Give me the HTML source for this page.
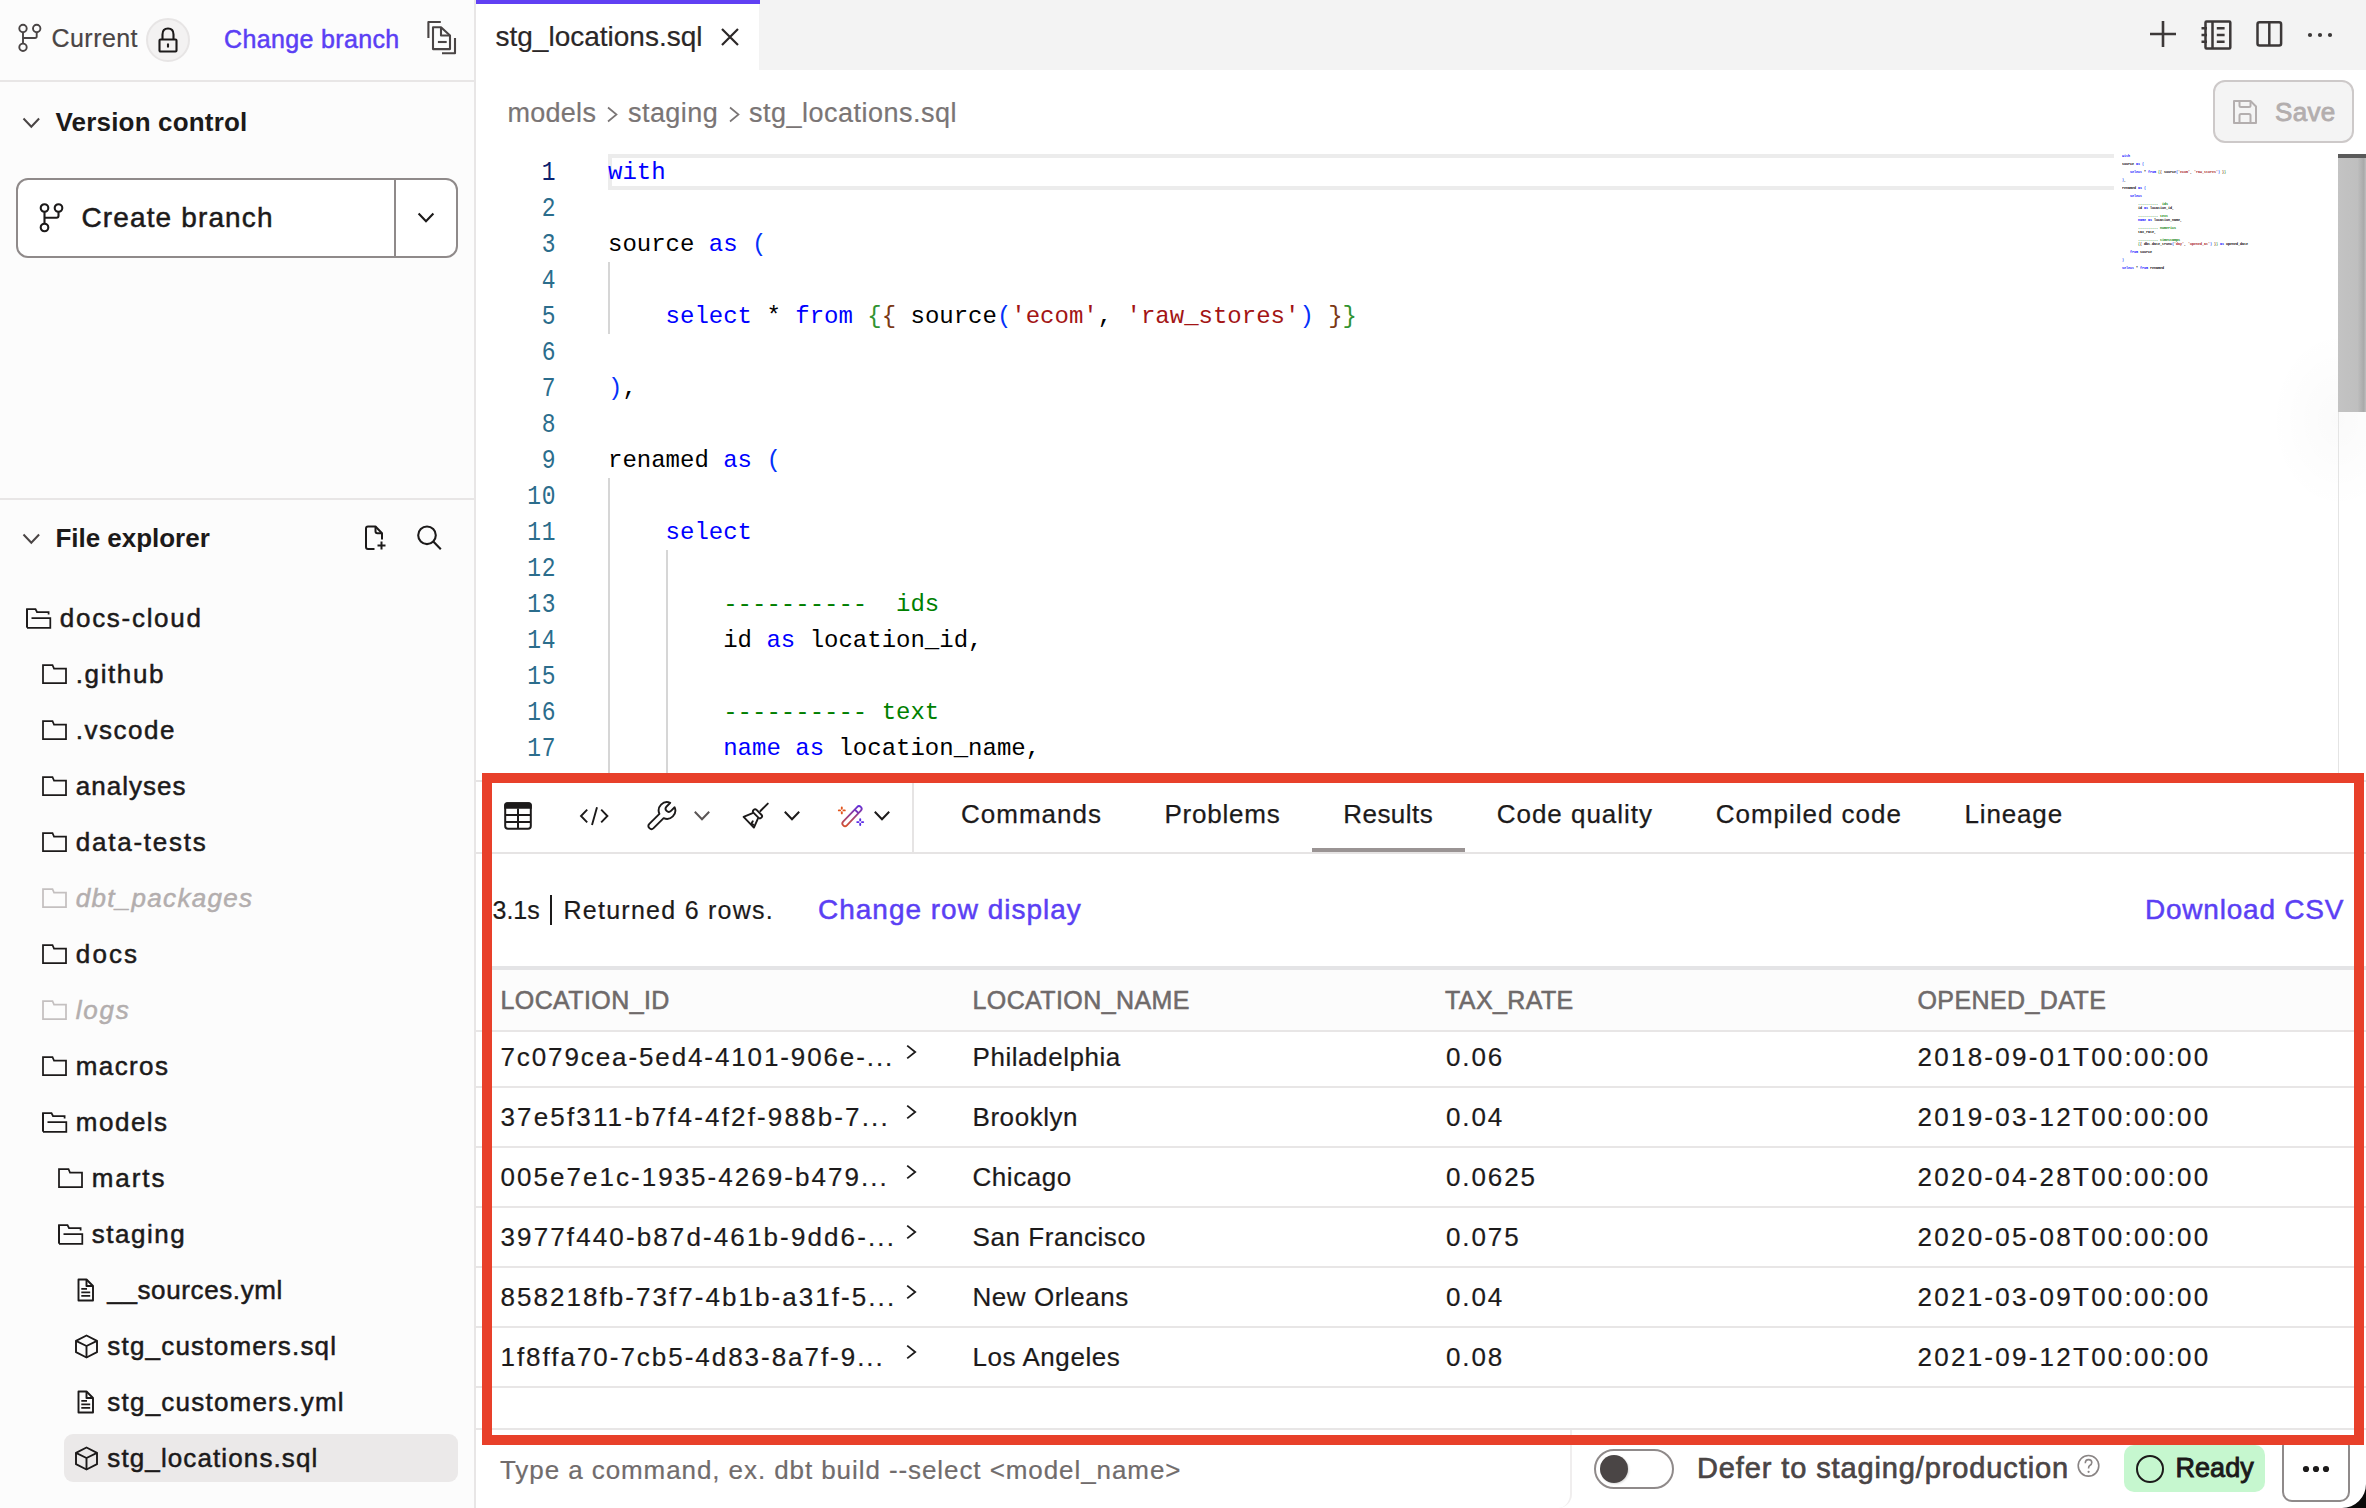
<!DOCTYPE html>
<html><head><meta charset='utf-8'><style>
html,body{margin:0;padding:0;}
body{width:2366px;height:1508px;overflow:hidden;position:relative;background:#fff;font-family:"Liberation Sans", sans-serif;}
.a{position:absolute;}
.t{position:absolute;white-space:pre;}
.ln{position:absolute;left:500px;width:56px;text-align:right;font-family:"Liberation Mono", monospace;font-size:27px;letter-spacing:0.7px;line-height:36px;height:36px;padding-top:1px;transform:scaleX(0.85);transform-origin:right center;}
.cl{position:absolute;left:608px;font-family:"Liberation Mono", monospace;font-size:24px;line-height:36px;height:36px;white-space:pre;padding-top:1px;}

</style></head><body>
<!-- sidebar -->
<div class='a' style='left:0;top:0;width:474px;height:1508px;background:#fcfcfc'></div>
<div class='a' style='left:474px;top:0;width:2px;height:1508px;background:#e8e6e6'></div>
<div class='a' style='left:0;top:80px;width:474px;height:2px;background:#e8e6e6'></div>
<div class='a' style='left:0;top:498px;width:474px;height:2px;background:#e8e6e6'></div>
<!-- tab bar -->
<div class='a' style='left:476px;top:0;width:1890px;height:70px;background:#f3f3f3'></div>
<div class='a' style='left:476px;top:0;width:283px;height:70px;background:#fff'></div>
<div class='a' style='left:476px;top:0;width:283.5px;height:4px;background:#6040f3'></div>
<!-- current line -->
<div class='a' style='left:608px;top:154px;width:1502px;height:28px;border:4px solid #ececec;border-right:none'></div>
<!-- indent guides -->
<div class='a' style='left:608px;top:262px;width:2px;height:72px;background:#d6d6d6'></div>
<div class='a' style='left:608px;top:478px;width:2px;height:302px;background:#d6d6d6'></div>
<div class='a' style='left:666px;top:550px;width:2px;height:230px;background:#d6d6d6'></div>
<div class='ln' style='top:154px;color:#0b216f'>1</div><div class='cl' style='top:154px'><span style='color:#0000ff'>with</span></div><div class='ln' style='top:190px;color:#2b6d8c'>2</div><div class='ln' style='top:226px;color:#2b6d8c'>3</div><div class='cl' style='top:226px'><span style='color:#000000'>source </span><span style='color:#0000ff'>as</span><span style='color:#000000'> </span><span style='color:#0431fa'>(</span></div><div class='ln' style='top:262px;color:#2b6d8c'>4</div><div class='ln' style='top:298px;color:#2b6d8c'>5</div><div class='cl' style='top:298px'><span style='color:#0000ff'>    select</span><span style='color:#000000'> * </span><span style='color:#0000ff'>from</span><span style='color:#000000'> </span><span style='color:#319331'>{</span><span style='color:#7b3814'>{</span><span style='color:#000000'> source</span><span style='color:#0431fa'>(</span><span style='color:#a31515'>&#x27;ecom&#x27;</span><span style='color:#000000'>, </span><span style='color:#a31515'>&#x27;raw_stores&#x27;</span><span style='color:#0431fa'>)</span><span style='color:#000000'> </span><span style='color:#7b3814'>}</span><span style='color:#319331'>}</span></div><div class='ln' style='top:334px;color:#2b6d8c'>6</div><div class='ln' style='top:370px;color:#2b6d8c'>7</div><div class='cl' style='top:370px'><span style='color:#0431fa'>)</span><span style='color:#000000'>,</span></div><div class='ln' style='top:406px;color:#2b6d8c'>8</div><div class='ln' style='top:442px;color:#2b6d8c'>9</div><div class='cl' style='top:442px'><span style='color:#000000'>renamed </span><span style='color:#0000ff'>as</span><span style='color:#000000'> </span><span style='color:#0431fa'>(</span></div><div class='ln' style='top:478px;color:#2b6d8c'>10</div><div class='ln' style='top:514px;color:#2b6d8c'>11</div><div class='cl' style='top:514px'><span style='color:#0000ff'>    select</span></div><div class='ln' style='top:550px;color:#2b6d8c'>12</div><div class='ln' style='top:586px;color:#2b6d8c'>13</div><div class='cl' style='top:586px'><span style='color:#008000'>        ----------  ids</span></div><div class='ln' style='top:622px;color:#2b6d8c'>14</div><div class='cl' style='top:622px'><span style='color:#000000'>        id </span><span style='color:#0000ff'>as</span><span style='color:#000000'> location_id,</span></div><div class='ln' style='top:658px;color:#2b6d8c'>15</div><div class='ln' style='top:694px;color:#2b6d8c'>16</div><div class='cl' style='top:694px'><span style='color:#008000'>        ---------- text</span></div><div class='ln' style='top:730px;color:#2b6d8c'>17</div><div class='cl' style='top:730px'><span style='color:#000000'>        </span><span style='color:#0000ff'>name</span><span style='color:#000000'> </span><span style='color:#0000ff'>as</span><span style='color:#000000'> location_name,</span></div>
<!-- minimap -->
<div class='a' style='left:2122px;top:154px;width:2000px;font-family:"Liberation Mono", monospace;font-size:24px;line-height:36px;transform:scale(0.13889,0.11111);transform-origin:0 0;font-weight:700'><div style='height:36px;white-space:pre'><span style='color:#0000ff'>with</span></div><div style='height:36px;white-space:pre'></div><div style='height:36px;white-space:pre'><span style='color:#000000'>source </span><span style='color:#0000ff'>as</span><span style='color:#000000'> </span><span style='color:#0431fa'>(</span></div><div style='height:36px;white-space:pre'></div><div style='height:36px;white-space:pre'><span style='color:#0000ff'>    select</span><span style='color:#000000'> * </span><span style='color:#0000ff'>from</span><span style='color:#000000'> </span><span style='color:#319331'>{</span><span style='color:#7b3814'>{</span><span style='color:#000000'> source</span><span style='color:#0431fa'>(</span><span style='color:#a31515'>&#x27;ecom&#x27;</span><span style='color:#000000'>, </span><span style='color:#a31515'>&#x27;raw_stores&#x27;</span><span style='color:#0431fa'>)</span><span style='color:#000000'> </span><span style='color:#7b3814'>}</span><span style='color:#319331'>}</span></div><div style='height:36px;white-space:pre'></div><div style='height:36px;white-space:pre'><span style='color:#0431fa'>)</span><span style='color:#000000'>,</span></div><div style='height:36px;white-space:pre'></div><div style='height:36px;white-space:pre'><span style='color:#000000'>renamed </span><span style='color:#0000ff'>as</span><span style='color:#000000'> </span><span style='color:#0431fa'>(</span></div><div style='height:36px;white-space:pre'></div><div style='height:36px;white-space:pre'><span style='color:#0000ff'>    select</span></div><div style='height:36px;white-space:pre'></div><div style='height:36px;white-space:pre'><span style='color:#008000'>        ----------  ids</span></div><div style='height:36px;white-space:pre'><span style='color:#000000'>        id </span><span style='color:#0000ff'>as</span><span style='color:#000000'> location_id,</span></div><div style='height:36px;white-space:pre'></div><div style='height:36px;white-space:pre'><span style='color:#008000'>        ---------- text</span></div><div style='height:36px;white-space:pre'><span style='color:#000000'>        </span><span style='color:#0000ff'>name</span><span style='color:#000000'> </span><span style='color:#0000ff'>as</span><span style='color:#000000'> location_name,</span></div><div style='height:36px;white-space:pre'></div><div style='height:36px;white-space:pre'><span style='color:#008000'>        ---------- numerics</span></div><div style='height:36px;white-space:pre'><span style='color:#000000'>        tax_rate,</span></div><div style='height:36px;white-space:pre'></div><div style='height:36px;white-space:pre'><span style='color:#008000'>        ---------- timestamps</span></div><div style='height:36px;white-space:pre'><span style='color:#000000'>        </span><span style='color:#319331'>{</span><span style='color:#7b3814'>{</span><span style='color:#000000'> dbt.date_trunc</span><span style='color:#0431fa'>(</span><span style='color:#a31515'>&#x27;day&#x27;</span><span style='color:#000000'>, </span><span style='color:#a31515'>&#x27;opened_at&#x27;</span><span style='color:#0431fa'>)</span><span style='color:#000000'> </span><span style='color:#7b3814'>}</span><span style='color:#319331'>}</span><span style='color:#000000'> </span><span style='color:#0000ff'>as</span><span style='color:#000000'> opened_date</span></div><div style='height:36px;white-space:pre'></div><div style='height:36px;white-space:pre'><span style='color:#0000ff'>    from</span><span style='color:#000000'> source</span></div><div style='height:36px;white-space:pre'></div><div style='height:36px;white-space:pre'><span style='color:#0431fa'>)</span></div><div style='height:36px;white-space:pre'></div><div style='height:36px;white-space:pre'><span style='color:#0000ff'>select</span><span style='color:#000000'> * </span><span style='color:#0000ff'>from</span><span style='color:#000000'> renamed</span></div></div>
<div class='a' style='left:2270px;top:330px;width:136px;height:180px;background:radial-gradient(ellipse 68px 90px at 68px 90px, rgba(0,0,0,0.02), rgba(0,0,0,0))'></div>
<div class='a' style='left:2338px;top:412px;width:1px;height:361px;background:#e4e4e4'></div>
<div class='a' style='left:2338px;top:154px;width:28px;height:258px;background:linear-gradient(to right,#c3c3c3 0%,#bfbfbf 70%,#a9a9a9 92%,#c0c0c0 100%)'></div>
<div class='a' style='left:2338px;top:154px;width:28px;height:4px;background:#5a5a5a'></div>
<!-- panel -->
<div class='a' style='left:476px;top:780px;width:1890px;height:2px;background:#e6e4e4'></div>
<div class='a' style='left:476px;top:852px;width:1890px;height:2px;background:#e6e4e4'></div>
<div class='a' style='left:912px;top:782px;width:2px;height:70px;background:#e6e4e4'></div>
<div class='a' style='left:1312px;top:848px;width:153px;height:4px;background:#9a9494'></div>
<div class='a' style='left:549.5px;top:895px;width:2.5px;height:30px;background:#1c1a1a'></div>
<div class='a' style='left:492px;top:966px;width:1874px;height:4px;background:#e4e4e6'></div>
<div class='a' style='left:492px;top:970px;width:1874px;height:60px;background:#fcfcfc'></div>
<div class='a' style='left:476px;top:1030px;width:1890px;height:2px;background:#e8e6e6'></div><div class='a' style='left:476px;top:1086px;width:1890px;height:2px;background:#e8e6e6'></div><div class='a' style='left:476px;top:1146px;width:1890px;height:2px;background:#e8e6e6'></div><div class='a' style='left:476px;top:1206px;width:1890px;height:2px;background:#e8e6e6'></div><div class='a' style='left:476px;top:1266px;width:1890px;height:2px;background:#e8e6e6'></div><div class='a' style='left:476px;top:1326px;width:1890px;height:2px;background:#e8e6e6'></div><div class='a' style='left:476px;top:1386px;width:1890px;height:2px;background:#e8e6e6'></div><div class='a' style='left:476px;top:1428px;width:1890px;height:2px;background:#e8e6e6'></div>
<!-- command bar -->
<div class='a' style='left:476px;top:1430px;width:1094px;height:78px;border-right:2px solid #f0eeee;border-bottom-right-radius:14px'></div>
<svg class='a' style='left:16px;top:22px;' width='28' height='32' viewBox='0 0 28 32' fill='none'><g stroke='#4a4545' stroke-width='1.9'><circle cx='7' cy='6.5' r='3.7'/><circle cx='20.7' cy='6.5' r='3.7'/><circle cx='7' cy='25.3' r='3.7'/><path d='M7 10.2V21.6M20.7 10.2V14.2Q20.7 16 18.9 16H7'/></g></svg><div class='a' style='left:146px;top:18px;width:40px;height:40px;border-radius:50%;background:#f3f2f2;border:2px solid #e7e5e5'></div><svg class='a' style='left:156px;top:26px;' width='24' height='28' viewBox='0 0 24 28' fill='none'><g stroke='#1c1a1a' stroke-width='2.1'><path d='M6.5 13.5V8.5Q6.5 2.5 12 2.5Q17.5 2.5 17.5 8.5V13.5'/><rect x='3.5' y='13.5' width='17' height='12' rx='1'/><path d='M12 17.5V21.5'/></g></svg><svg class='a' style='left:426px;top:20px;' width='32' height='36' viewBox='0 0 32 36' fill='none'><g stroke='#4a4545' stroke-width='2.1' stroke-linejoin='round'><path d='M2.4 17.9V2H14.8'/><path d='M7 7.2H15L24 15.5V29.1H7Z'/><path d='M15 7.2V15.5H24' /><path d='M11.9 22H20.7'/><path d='M29 17.9V33.3H16'/></g></svg><svg class='a' style='left:22px;top:115.5px;' width='20' height='14' viewBox='0 0 20 14' fill='none'><path d='M1.5 2.5L9.3 10.8L17.1 2.5' stroke='#4a4545' stroke-width='2'/></svg><svg class='a' style='left:22px;top:531.5px;' width='20' height='14' viewBox='0 0 20 14' fill='none'><path d='M1.5 2.5L9.3 10.8L17.1 2.5' stroke='#4a4545' stroke-width='2'/></svg><div class='a' style='left:16px;top:178px;width:438px;height:76px;border:2px solid #8f8a8a;border-radius:12px;background:#fff'></div><div class='a' style='left:394px;top:180px;width:2px;height:76px;background:#8f8a8a'></div><svg class='a' style='left:38px;top:202px;' width='28' height='32' viewBox='0 0 28 32' fill='none'><g stroke='#1c1a1a' stroke-width='2.1'><circle cx='6.5' cy='6' r='3.8'/><circle cx='20.5' cy='6' r='3.8'/><circle cx='6.5' cy='25.5' r='3.8'/><path d='M6.5 9.8V21.7M20.5 9.8V13.8Q20.5 15.8 18.5 15.8H6.5'/></g></svg><svg class='a' style='left:416px;top:211px;' width='20' height='14' viewBox='0 0 20 14' fill='none'><path d='M2.6 2.5L10 10.3L17.4 2.5' stroke='#1c1a1a' stroke-width='2.1'/></svg><svg class='a' style='left:362px;top:523px;' width='28' height='30' viewBox='0 0 28 30' fill='none'><g stroke='#1c1a1a' stroke-width='2' stroke-linejoin='round'><path d='M12.5 26H6Q4 26 4 24V5.5Q4 3.5 6 3.5H13.5L20 10.2V16.5'/><path d='M13.5 3.5V8.2Q13.5 10.2 15.5 10.2H20'/><path d='M19.5 18.5V26.5M15.5 22.5H23.5'/></g></svg><svg class='a' style='left:415px;top:523px;' width='30' height='30' viewBox='0 0 30 30' fill='none'><g stroke='#1c1a1a' stroke-width='2.1'><circle cx='12' cy='12.3' r='8.8'/><path d='M18.3 18.6L25.8 26.2'/></g></svg><div class='a' style='left:64px;top:1434px;width:394px;height:48px;border-radius:9px;background:#ebe9e9'></div><svg class='a' style='left:26px;top:608px;' width='28' height='24' viewBox='0 0 28 24' fill='none'><path d='M1 19V1H9.5L11 4H22.6V6.5' stroke='#1c1a1a' stroke-width='1.75'/><path d='M5.5 10.2H24.3V19.8H1' stroke='#1c1a1a' stroke-width='1.75'/><path d='M1 1V19.8' stroke='#1c1a1a' stroke-width='1.75'/></svg><svg class='a' style='left:42px;top:664px;' width='28' height='24' viewBox='0 0 28 24' fill='none'><path d='M1 19V1H10.5L12 4.5H24V19Z' stroke='#1c1a1a' stroke-width='1.75' stroke-linejoin='miter'/></svg><svg class='a' style='left:42px;top:720px;' width='28' height='24' viewBox='0 0 28 24' fill='none'><path d='M1 19V1H10.5L12 4.5H24V19Z' stroke='#1c1a1a' stroke-width='1.75' stroke-linejoin='miter'/></svg><svg class='a' style='left:42px;top:776px;' width='28' height='24' viewBox='0 0 28 24' fill='none'><path d='M1 19V1H10.5L12 4.5H24V19Z' stroke='#1c1a1a' stroke-width='1.75' stroke-linejoin='miter'/></svg><svg class='a' style='left:42px;top:832px;' width='28' height='24' viewBox='0 0 28 24' fill='none'><path d='M1 19V1H10.5L12 4.5H24V19Z' stroke='#1c1a1a' stroke-width='1.75' stroke-linejoin='miter'/></svg><svg class='a' style='left:42px;top:888px;' width='28' height='24' viewBox='0 0 28 24' fill='none'><path d='M1 19V1H10.5L12 4.5H24V19Z' stroke='#c4c0c0' stroke-width='1.75' stroke-linejoin='miter'/></svg><svg class='a' style='left:42px;top:944px;' width='28' height='24' viewBox='0 0 28 24' fill='none'><path d='M1 19V1H10.5L12 4.5H24V19Z' stroke='#1c1a1a' stroke-width='1.75' stroke-linejoin='miter'/></svg><svg class='a' style='left:42px;top:1000px;' width='28' height='24' viewBox='0 0 28 24' fill='none'><path d='M1 19V1H10.5L12 4.5H24V19Z' stroke='#c4c0c0' stroke-width='1.75' stroke-linejoin='miter'/></svg><svg class='a' style='left:42px;top:1056px;' width='28' height='24' viewBox='0 0 28 24' fill='none'><path d='M1 19V1H10.5L12 4.5H24V19Z' stroke='#1c1a1a' stroke-width='1.75' stroke-linejoin='miter'/></svg><svg class='a' style='left:42px;top:1112px;' width='28' height='24' viewBox='0 0 28 24' fill='none'><path d='M1 19V1H9.5L11 4H22.6V6.5' stroke='#1c1a1a' stroke-width='1.75'/><path d='M5.5 10.2H24.3V19.8H1' stroke='#1c1a1a' stroke-width='1.75'/><path d='M1 1V19.8' stroke='#1c1a1a' stroke-width='1.75'/></svg><svg class='a' style='left:58px;top:1168px;' width='28' height='24' viewBox='0 0 28 24' fill='none'><path d='M1 19V1H10.5L12 4.5H24V19Z' stroke='#1c1a1a' stroke-width='1.75' stroke-linejoin='miter'/></svg><svg class='a' style='left:58px;top:1224px;' width='28' height='24' viewBox='0 0 28 24' fill='none'><path d='M1 19V1H9.5L11 4H22.6V6.5' stroke='#1c1a1a' stroke-width='1.75'/><path d='M5.5 10.2H24.3V19.8H1' stroke='#1c1a1a' stroke-width='1.75'/><path d='M1 1V19.8' stroke='#1c1a1a' stroke-width='1.75'/></svg><svg class='a' style='left:77px;top:1277.5px;' width='18' height='24' viewBox='0 0 18 24' fill='none'><g stroke='#1c1a1a' stroke-width='1.9' stroke-linejoin='round'><path d='M1.5 1.5H9.5L16 8V22.5H1.5Z'/><path d='M9.5 1.5V8H16'/></g><g stroke='#1c1a1a' stroke-width='1.8'><path d='M4.3 10.8H10M4.3 14.3H13.2M4.3 17.8H13.2'/></g></svg><svg class='a' style='left:74.5px;top:1333.5px;' width='23' height='25' viewBox='0 0 23 25' fill='none'><g stroke='#1c1a1a' stroke-width='1.9' stroke-linejoin='round'><path d='M11.5 1.5L22 6.8V18.2L11.5 23.5L1 18.2V6.8Z'/><path d='M1 6.8L11.5 12L22 6.8M11.5 12V23.5'/></g></svg><svg class='a' style='left:77px;top:1389.5px;' width='18' height='24' viewBox='0 0 18 24' fill='none'><g stroke='#1c1a1a' stroke-width='1.9' stroke-linejoin='round'><path d='M1.5 1.5H9.5L16 8V22.5H1.5Z'/><path d='M9.5 1.5V8H16'/></g><g stroke='#1c1a1a' stroke-width='1.8'><path d='M4.3 10.8H10M4.3 14.3H13.2M4.3 17.8H13.2'/></g></svg><svg class='a' style='left:74.5px;top:1445.5px;' width='23' height='25' viewBox='0 0 23 25' fill='none'><g stroke='#1c1a1a' stroke-width='1.9' stroke-linejoin='round'><path d='M11.5 1.5L22 6.8V18.2L11.5 23.5L1 18.2V6.8Z'/><path d='M1 6.8L11.5 12L22 6.8M11.5 12V23.5'/></g></svg><svg class='a' style='left:605px;top:105px;' width='16' height='20' viewBox='0 0 16 20' fill='none'><path d='M3 2.5L11.5 9.5L3 16.5' stroke='#7a7575' stroke-width='1.7'/></svg><svg class='a' style='left:726.5px;top:105px;' width='16' height='20' viewBox='0 0 16 20' fill='none'><path d='M3 2.5L11.5 9.5L3 16.5' stroke='#7a7575' stroke-width='1.7'/></svg><svg class='a' style='left:719px;top:26px;' width='22' height='22' viewBox='0 0 22 22' fill='none'><path d='M3 3L19 19M19 3L3 19' stroke='#2b2727' stroke-width='2.2'/></svg><svg class='a' style='left:2148px;top:19px;' width='30' height='30' viewBox='0 0 30 30' fill='none'><path d='M15 2V28M2 15H28' stroke='#3c3838' stroke-width='2.6'/></svg><svg class='a' style='left:2199px;top:18px;' width='34' height='34' viewBox='0 0 34 34' fill='none'><g stroke='#3c3838' stroke-width='2.5'><rect x='6.5' y='3.5' width='24.8' height='27' rx='1'/><path d='M13.5 3.7V30.3M17.8 10.2H25.6M17.8 17H25.6M17.8 23.8H25.6M2.5 10.2H8M2.5 17H8M2.5 23.8H8'/></g></svg><svg class='a' style='left:2254px;top:19px;' width='30' height='30' viewBox='0 0 30 30' fill='none'><g stroke='#3c3838' stroke-width='2.5'><rect x='3.5' y='3.2' width='23.6' height='23.4' rx='2'/><path d='M15.3 3V26.6'/></g></svg><svg class='a' style='left:2304px;top:29px;' width='32' height='12' viewBox='0 0 32 12' fill='none'><g fill='#3c3838'><circle cx='6' cy='6' r='2.1'/><circle cx='16' cy='6' r='2.1'/><circle cx='26' cy='6' r='2.1'/></g></svg><div class='a' style='left:2213px;top:80px;width:137px;height:59px;border:2px solid #cdc9c9;border-radius:12px;background:#f4f4f4'></div><svg class='a' style='left:2231px;top:98px;' width='28' height='28' viewBox='0 0 28 28' fill='none'><g stroke='#b3aeae' stroke-width='2' stroke-linejoin='round'><path d='M3 3H19.5L25 8.5V25H3Z'/><path d='M8.5 3V7.5Q8.5 9 10 9H18Q19.5 9 19.5 7.5V3'/><path d='M8.5 25V17.5Q8.5 16 10 16H18Q19.5 16 19.5 17.5V25'/></g></svg><svg class='a' style='left:502px;top:800px;' width='32' height='32' viewBox='0 0 32 32' fill='none'><g stroke='#1c1a1a' stroke-width='2'><rect x='3.2' y='3.2' width='25.6' height='25.6' rx='2.8'/><path d='M3.2 14.9H28.8M3.2 21.9H28.8M16 8.5V28.8'/></g><path d='M2.2 5.2Q2.2 2.2 5.2 2.2H26.8Q29.8 2.2 29.8 5.2V8.8H2.2Z' fill='#1c1a1a'/></svg><svg class='a' style='left:578px;top:804px;' width='32' height='24' viewBox='0 0 32 24' fill='none'><g stroke='#1c1a1a' stroke-width='1.9'><path d='M9.2 5.6L3 12L9.2 18.3M23.2 5.6L29.4 12L23.2 18.3M19 3.3L14 21'/></g></svg><svg class='a' style='left:647px;top:800px;' width='32' height='32' viewBox='0 0 32 32' fill='none'><path d='M23.24 2.86A8.3 8.3 0 0 0 12.41 13.85L2.33 23.93A3 3 0 0 0 6.57 28.17L16.65 18.09A8.3 8.3 0 0 0 27.64 7.26L24 10.9A3.1 3.1 0 0 1 19.6 6.5Z' stroke='#1c1a1a' stroke-width='1.9' stroke-linejoin='round'/></svg><svg class='a' style='left:741px;top:801px;' width='30' height='30' viewBox='0 0 30 30' fill='none'><g stroke='#1c1a1a' stroke-width='1.9' stroke-linejoin='round' stroke-linecap='round'><path d='M26.8 2.6L19.4 10'/><rect x='14.4' y='7.3' width='4.2' height='11' rx='2.1' transform='rotate(-45 16.5 12.8)'/><path d='M11.6 12.2L2.6 15.9L12.9 26.6L16.9 17.6'/><path d='M11.8 20.2L10.4 22.6L12.4 23.8'/></g></svg><svg class='a' style='left:835px;top:801px' width='32' height='30' viewBox='0 0 32 30' fill='none'><defs><linearGradient id='wg' gradientUnits='userSpaceOnUse' x1='9' y1='24' x2='25' y2='7'><stop offset='0' stop-color='#e2541b'/><stop offset='1' stop-color='#5a2be6'/></linearGradient></defs><g stroke='url(#wg)' stroke-width='1.8'><rect x='4.25' y='12.55' width='25.5' height='5.2' rx='2.6' transform='rotate(-46.4 17 15.15)'/><path d='M19.7 8.5L23.5 12.1'/></g><g stroke-width='1.9' stroke-linecap='round'><path d='M6.8 6.4V7.7M6.8 11.1V12.4M3.8 9.4H5.1M8.5 9.4H9.8' stroke='#e2541b'/><path d='M25.2 18.1V19.4M25.2 22.8V24.1M22.2 21.1H23.5M26.9 21.1H28.2' stroke='#5a2be6'/></g></svg><svg class='a' style='left:693px;top:810px;' width='18' height='12' viewBox='0 0 18 12' fill='none'><path d='M1.8 1.8L9 9.2L16.2 1.8' stroke='#5a5555' stroke-width='2'/></svg><svg class='a' style='left:783px;top:810px;' width='18' height='12' viewBox='0 0 18 12' fill='none'><path d='M1.8 1.8L9 9.2L16.2 1.8' stroke='#1c1a1a' stroke-width='2'/></svg><svg class='a' style='left:873px;top:810px;' width='18' height='12' viewBox='0 0 18 12' fill='none'><path d='M1.8 1.8L9 9.2L16.2 1.8' stroke='#1c1a1a' stroke-width='2'/></svg><svg class='a' style='left:903px;top:1043px;' width='16' height='18' viewBox='0 0 16 18' fill='none'><path d='M4.2 2.6L12.2 9L4.2 15.4' stroke='#1c1a1a' stroke-width='1.8'/></svg><svg class='a' style='left:903px;top:1102.6px;' width='16' height='18' viewBox='0 0 16 18' fill='none'><path d='M4.2 2.6L12.2 9L4.2 15.4' stroke='#1c1a1a' stroke-width='1.8'/></svg><svg class='a' style='left:903px;top:1162.6px;' width='16' height='18' viewBox='0 0 16 18' fill='none'><path d='M4.2 2.6L12.2 9L4.2 15.4' stroke='#1c1a1a' stroke-width='1.8'/></svg><svg class='a' style='left:903px;top:1222.6px;' width='16' height='18' viewBox='0 0 16 18' fill='none'><path d='M4.2 2.6L12.2 9L4.2 15.4' stroke='#1c1a1a' stroke-width='1.8'/></svg><svg class='a' style='left:903px;top:1282.6px;' width='16' height='18' viewBox='0 0 16 18' fill='none'><path d='M4.2 2.6L12.2 9L4.2 15.4' stroke='#1c1a1a' stroke-width='1.8'/></svg><svg class='a' style='left:903px;top:1343px;' width='16' height='18' viewBox='0 0 16 18' fill='none'><path d='M4.2 2.6L12.2 9L4.2 15.4' stroke='#1c1a1a' stroke-width='1.8'/></svg><div class='a' style='left:1594px;top:1449px;width:76px;height:36px;border:2px solid #8f8a8a;border-radius:20px;background:#fff'></div><div class='a' style='left:1600px;top:1455px;width:28px;height:28px;border-radius:50%;background:#4a4545;box-shadow:1px 1px 2px rgba(0,0,0,0.15)'></div><svg class='a' style='left:2075px;top:1453px;' width='28' height='26' viewBox='0 0 28 26' fill='none'><circle cx='13.5' cy='12.8' r='10.3' stroke='#8a8585' stroke-width='1.6'/><path d='M10.3 10.2Q10.3 6.6 13.6 6.6Q16.8 6.6 16.8 9.6Q16.8 11.5 14.8 12.5Q13.6 13.2 13.6 15V15.5' stroke='#8a8585' stroke-width='1.6'/><circle cx='13.6' cy='18.8' r='1.1' fill='#8a8585'/></svg><div class='a' style='left:2124px;top:1445px;width:141px;height:47px;border-radius:10px;background:#c6f7cf'></div><div class='a' style='left:2136px;top:1455px;width:24px;height:24px;border-radius:50%;border:2px solid #1c1a1a'></div><div class='a' style='left:2282px;top:1436px;width:64px;height:62px;border:2px solid #8f8a8a;border-radius:10px;background:#fff'></div><svg class='a' style='left:2298px;top:1462px;' width='36' height='14' viewBox='0 0 36 14' fill='none'><g fill='#1c1a1a'><circle cx='8' cy='7' r='3.1'/><circle cx='18' cy='7' r='3.1'/><circle cx='28' cy='7' r='3.1'/></g></svg>
<div class='t' style='left:51.5px;top:26.0px;font-size:25px;line-height:25px;font-weight:400;color:#4a4545;-webkit-text-stroke:0.2px #4a4545;letter-spacing:0.45px;'>Current</div><div class='t' style='left:224.0px;top:26.7px;font-size:25px;line-height:25px;font-weight:400;color:#5b3ff4;-webkit-text-stroke:0.5px #5b3ff4;letter-spacing:0.35px;'>Change branch</div><div class='t' style='left:55.5px;top:109.2px;font-size:26px;line-height:26px;font-weight:700;color:#1c1a1a;letter-spacing:0.18px;'>Version control</div><div class='t' style='left:81.5px;top:204.1px;font-size:28px;line-height:28px;font-weight:400;color:#1c1a1a;-webkit-text-stroke:0.5px #1c1a1a;letter-spacing:1.13px;'>Create branch</div><div class='t' style='left:55.5px;top:525.0px;font-size:26px;line-height:26px;font-weight:700;color:#1c1a1a;letter-spacing:-0.03px;'>File explorer</div><div class='t' style='left:59.8px;top:604.8px;font-size:26px;line-height:26px;font-weight:400;color:#1c1a1a;-webkit-text-stroke:0.5px #1c1a1a;letter-spacing:1.71px;'>docs-cloud</div><div class='t' style='left:75.8px;top:660.8px;font-size:26px;line-height:26px;font-weight:400;color:#1c1a1a;-webkit-text-stroke:0.5px #1c1a1a;letter-spacing:1.59px;'>.github</div><div class='t' style='left:75.8px;top:716.8px;font-size:26px;line-height:26px;font-weight:400;color:#1c1a1a;-webkit-text-stroke:0.5px #1c1a1a;letter-spacing:1.49px;'>.vscode</div><div class='t' style='left:75.8px;top:772.8px;font-size:26px;line-height:26px;font-weight:400;color:#1c1a1a;-webkit-text-stroke:0.5px #1c1a1a;letter-spacing:1.00px;'>analyses</div><div class='t' style='left:75.8px;top:828.8px;font-size:26px;line-height:26px;font-weight:400;color:#1c1a1a;-webkit-text-stroke:0.5px #1c1a1a;letter-spacing:1.75px;'>data-tests</div><div class='t' style='left:75.8px;top:884.8px;font-size:26px;line-height:26px;font-weight:400;color:#b3aeae;-webkit-text-stroke:0.5px #b3aeae;font-style:italic;letter-spacing:1.30px;'>dbt_packages</div><div class='t' style='left:75.8px;top:940.8px;font-size:26px;line-height:26px;font-weight:400;color:#1c1a1a;-webkit-text-stroke:0.5px #1c1a1a;letter-spacing:2.13px;'>docs</div><div class='t' style='left:75.8px;top:996.8px;font-size:26px;line-height:26px;font-weight:400;color:#b3aeae;-webkit-text-stroke:0.5px #b3aeae;font-style:italic;letter-spacing:1.77px;'>logs</div><div class='t' style='left:75.8px;top:1052.8px;font-size:26px;line-height:26px;font-weight:400;color:#1c1a1a;-webkit-text-stroke:0.5px #1c1a1a;letter-spacing:1.37px;'>macros</div><div class='t' style='left:75.8px;top:1108.8px;font-size:26px;line-height:26px;font-weight:400;color:#1c1a1a;-webkit-text-stroke:0.5px #1c1a1a;letter-spacing:1.50px;'>models</div><div class='t' style='left:91.8px;top:1164.8px;font-size:26px;line-height:26px;font-weight:400;color:#1c1a1a;-webkit-text-stroke:0.5px #1c1a1a;letter-spacing:1.90px;'>marts</div><div class='t' style='left:91.8px;top:1220.8px;font-size:26px;line-height:26px;font-weight:400;color:#1c1a1a;-webkit-text-stroke:0.5px #1c1a1a;letter-spacing:1.53px;'>staging</div><div class='t' style='left:107.3px;top:1276.8px;font-size:26px;line-height:26px;font-weight:400;color:#1c1a1a;-webkit-text-stroke:0.5px #1c1a1a;letter-spacing:0.62px;'>__sources.yml</div><div class='t' style='left:107.3px;top:1332.8px;font-size:26px;line-height:26px;font-weight:400;color:#1c1a1a;-webkit-text-stroke:0.5px #1c1a1a;letter-spacing:1.20px;'>stg_customers.sql</div><div class='t' style='left:107.3px;top:1388.8px;font-size:26px;line-height:26px;font-weight:400;color:#1c1a1a;-webkit-text-stroke:0.5px #1c1a1a;letter-spacing:1.22px;'>stg_customers.yml</div><div class='t' style='left:107.3px;top:1444.8px;font-size:26px;line-height:26px;font-weight:400;color:#1c1a1a;-webkit-text-stroke:0.5px #1c1a1a;letter-spacing:1.11px;'>stg_locations.sql</div><div class='t' style='left:495.5px;top:22.9px;font-size:28px;line-height:28px;font-weight:400;color:#2b2727;-webkit-text-stroke:0.2px #2b2727;letter-spacing:-0.00px;'>stg_locations.sql</div><div class='t' style='left:507.5px;top:99.7px;font-size:27px;line-height:27px;font-weight:400;color:#7a7575;-webkit-text-stroke:0.2px #7a7575;letter-spacing:0.27px;'>models</div><div class='t' style='left:628.0px;top:99.7px;font-size:27px;line-height:27px;font-weight:400;color:#7a7575;-webkit-text-stroke:0.2px #7a7575;letter-spacing:0.44px;'>staging</div><div class='t' style='left:749.0px;top:99.7px;font-size:27px;line-height:27px;font-weight:400;color:#7a7575;-webkit-text-stroke:0.2px #7a7575;letter-spacing:0.49px;'>stg_locations.sql</div><div class='t' style='left:2275.0px;top:99.0px;font-size:26px;line-height:26px;font-weight:400;color:#b3aeae;-webkit-text-stroke:0.85px #b3aeae;letter-spacing:0.35px;'>Save</div><div class='t' style='left:961.0px;top:801.4px;font-size:26px;line-height:26px;font-weight:400;color:#1c1a1a;-webkit-text-stroke:0.25px #1c1a1a;letter-spacing:1.00px;'>Commands</div><div class='t' style='left:1164.5px;top:801.4px;font-size:26px;line-height:26px;font-weight:400;color:#1c1a1a;-webkit-text-stroke:0.25px #1c1a1a;letter-spacing:0.76px;'>Problems</div><div class='t' style='left:1343.3px;top:801.4px;font-size:26px;line-height:26px;font-weight:400;color:#1c1a1a;-webkit-text-stroke:0.25px #1c1a1a;letter-spacing:0.44px;'>Results</div><div class='t' style='left:1496.8px;top:801.4px;font-size:26px;line-height:26px;font-weight:400;color:#1c1a1a;-webkit-text-stroke:0.25px #1c1a1a;letter-spacing:0.96px;'>Code quality</div><div class='t' style='left:1715.7px;top:801.4px;font-size:26px;line-height:26px;font-weight:400;color:#1c1a1a;-webkit-text-stroke:0.25px #1c1a1a;letter-spacing:0.98px;'>Compiled code</div><div class='t' style='left:1964.5px;top:801.4px;font-size:26px;line-height:26px;font-weight:400;color:#1c1a1a;-webkit-text-stroke:0.25px #1c1a1a;letter-spacing:0.85px;'>Lineage</div><div class='t' style='left:492.5px;top:897.8px;font-size:25px;line-height:25px;font-weight:400;color:#1c1a1a;-webkit-text-stroke:0.2px #1c1a1a;'>3.1s</div><div class='t' style='left:563.5px;top:897.8px;font-size:25px;line-height:25px;font-weight:400;color:#1c1a1a;-webkit-text-stroke:0.2px #1c1a1a;letter-spacing:1.26px;'>Returned 6 rows.</div><div class='t' style='left:818.0px;top:895.6px;font-size:28px;line-height:28px;font-weight:400;color:#5b3ff4;-webkit-text-stroke:0.5px #5b3ff4;letter-spacing:0.99px;'>Change row display</div><div class='t' style='left:2145.0px;top:896.3px;font-size:28px;line-height:28px;font-weight:400;color:#5b3ff4;-webkit-text-stroke:0.5px #5b3ff4;letter-spacing:0.78px;'>Download CSV</div><div class='t' style='left:500.5px;top:987.7px;font-size:25px;line-height:25px;font-weight:400;color:#6f6a6a;-webkit-text-stroke:0.55px #6f6a6a;letter-spacing:0.4px;'>LOCATION_ID</div><div class='t' style='left:972.5px;top:987.7px;font-size:25px;line-height:25px;font-weight:400;color:#6f6a6a;-webkit-text-stroke:0.55px #6f6a6a;letter-spacing:0.4px;'>LOCATION_NAME</div><div class='t' style='left:1445.0px;top:987.7px;font-size:25px;line-height:25px;font-weight:400;color:#6f6a6a;-webkit-text-stroke:0.55px #6f6a6a;letter-spacing:0.4px;'>TAX_RATE</div><div class='t' style='left:1917.5px;top:987.7px;font-size:25px;line-height:25px;font-weight:400;color:#6f6a6a;-webkit-text-stroke:0.55px #6f6a6a;letter-spacing:0.4px;'>OPENED_DATE</div><div class='t' style='left:500.5px;top:1044.0px;font-size:26px;line-height:26px;font-weight:400;color:#1c1a1a;-webkit-text-stroke:0.2px #1c1a1a;letter-spacing:1.89px;'>7c079cea-5ed4-4101-906e-...</div><div class='t' style='left:972.5px;top:1044.0px;font-size:26px;line-height:26px;font-weight:400;color:#1c1a1a;-webkit-text-stroke:0.2px #1c1a1a;letter-spacing:0.56px;'>Philadelphia</div><div class='t' style='left:1446.0px;top:1044.0px;font-size:26px;line-height:26px;font-weight:400;color:#1c1a1a;-webkit-text-stroke:0.2px #1c1a1a;letter-spacing:1.9px;'>0.06</div><div class='t' style='left:1917.5px;top:1044.0px;font-size:26px;line-height:26px;font-weight:400;color:#1c1a1a;-webkit-text-stroke:0.2px #1c1a1a;letter-spacing:2.25px;'>2018-09-01T00:00:00</div><div class='t' style='left:500.5px;top:1103.6px;font-size:26px;line-height:26px;font-weight:400;color:#1c1a1a;-webkit-text-stroke:0.2px #1c1a1a;letter-spacing:2.15px;'>37e5f311-b7f4-4f2f-988b-7...</div><div class='t' style='left:972.5px;top:1103.6px;font-size:26px;line-height:26px;font-weight:400;color:#1c1a1a;-webkit-text-stroke:0.2px #1c1a1a;letter-spacing:0.56px;'>Brooklyn</div><div class='t' style='left:1446.0px;top:1103.6px;font-size:26px;line-height:26px;font-weight:400;color:#1c1a1a;-webkit-text-stroke:0.2px #1c1a1a;letter-spacing:1.9px;'>0.04</div><div class='t' style='left:1917.5px;top:1103.6px;font-size:26px;line-height:26px;font-weight:400;color:#1c1a1a;-webkit-text-stroke:0.2px #1c1a1a;letter-spacing:2.25px;'>2019-03-12T00:00:00</div><div class='t' style='left:500.5px;top:1163.6px;font-size:26px;line-height:26px;font-weight:400;color:#1c1a1a;-webkit-text-stroke:0.2px #1c1a1a;letter-spacing:2.03px;'>005e7e1c-1935-4269-b479...</div><div class='t' style='left:972.5px;top:1163.6px;font-size:26px;line-height:26px;font-weight:400;color:#1c1a1a;-webkit-text-stroke:0.2px #1c1a1a;letter-spacing:0.56px;'>Chicago</div><div class='t' style='left:1446.0px;top:1163.6px;font-size:26px;line-height:26px;font-weight:400;color:#1c1a1a;-webkit-text-stroke:0.2px #1c1a1a;letter-spacing:1.9px;'>0.0625</div><div class='t' style='left:1917.5px;top:1163.6px;font-size:26px;line-height:26px;font-weight:400;color:#1c1a1a;-webkit-text-stroke:0.2px #1c1a1a;letter-spacing:2.25px;'>2020-04-28T00:00:00</div><div class='t' style='left:500.5px;top:1223.6px;font-size:26px;line-height:26px;font-weight:400;color:#1c1a1a;-webkit-text-stroke:0.2px #1c1a1a;letter-spacing:2.12px;'>3977f440-b87d-461b-9dd6-...</div><div class='t' style='left:972.5px;top:1223.6px;font-size:26px;line-height:26px;font-weight:400;color:#1c1a1a;-webkit-text-stroke:0.2px #1c1a1a;letter-spacing:0.56px;'>San Francisco</div><div class='t' style='left:1446.0px;top:1223.6px;font-size:26px;line-height:26px;font-weight:400;color:#1c1a1a;-webkit-text-stroke:0.2px #1c1a1a;letter-spacing:1.9px;'>0.075</div><div class='t' style='left:1917.5px;top:1223.6px;font-size:26px;line-height:26px;font-weight:400;color:#1c1a1a;-webkit-text-stroke:0.2px #1c1a1a;letter-spacing:2.25px;'>2020-05-08T00:00:00</div><div class='t' style='left:500.5px;top:1283.6px;font-size:26px;line-height:26px;font-weight:400;color:#1c1a1a;-webkit-text-stroke:0.2px #1c1a1a;letter-spacing:2.05px;'>858218fb-73f7-4b1b-a31f-5...</div><div class='t' style='left:972.5px;top:1283.6px;font-size:26px;line-height:26px;font-weight:400;color:#1c1a1a;-webkit-text-stroke:0.2px #1c1a1a;letter-spacing:0.56px;'>New Orleans</div><div class='t' style='left:1446.0px;top:1283.6px;font-size:26px;line-height:26px;font-weight:400;color:#1c1a1a;-webkit-text-stroke:0.2px #1c1a1a;letter-spacing:1.9px;'>0.04</div><div class='t' style='left:1917.5px;top:1283.6px;font-size:26px;line-height:26px;font-weight:400;color:#1c1a1a;-webkit-text-stroke:0.2px #1c1a1a;letter-spacing:2.25px;'>2021-03-09T00:00:00</div><div class='t' style='left:500.5px;top:1344.0px;font-size:26px;line-height:26px;font-weight:400;color:#1c1a1a;-webkit-text-stroke:0.2px #1c1a1a;letter-spacing:1.97px;'>1f8ffa70-7cb5-4d83-8a7f-9...</div><div class='t' style='left:972.5px;top:1344.0px;font-size:26px;line-height:26px;font-weight:400;color:#1c1a1a;-webkit-text-stroke:0.2px #1c1a1a;letter-spacing:0.56px;'>Los Angeles</div><div class='t' style='left:1446.0px;top:1344.0px;font-size:26px;line-height:26px;font-weight:400;color:#1c1a1a;-webkit-text-stroke:0.2px #1c1a1a;letter-spacing:1.9px;'>0.08</div><div class='t' style='left:1917.5px;top:1344.0px;font-size:26px;line-height:26px;font-weight:400;color:#1c1a1a;-webkit-text-stroke:0.2px #1c1a1a;letter-spacing:2.25px;'>2021-09-12T00:00:00</div><div class='t' style='left:500.0px;top:1457.2px;font-size:26px;line-height:26px;font-weight:400;color:#716c6c;-webkit-text-stroke:0.2px #716c6c;letter-spacing:0.92px;'>Type a command, ex. dbt build --select &lt;model_name&gt;</div><div class='t' style='left:1697.0px;top:1454.3px;font-size:29px;line-height:29px;font-weight:400;color:#4a4545;-webkit-text-stroke:0.65px #4a4545;letter-spacing:0.88px;'>Defer to staging/production</div><div class='t' style='left:2175.5px;top:1455.1px;font-size:27px;line-height:27px;font-weight:400;color:#1c1a1a;-webkit-text-stroke:0.9px #1c1a1a;letter-spacing:0.04px;'>Ready</div>
<!-- red annotation -->
<div class='a' style='left:482px;top:773px;width:1862px;height:652px;border:10px solid #e8402a'></div>
<!-- window corner -->
<svg class='a' style='left:2342px;top:1484px' width='24' height='24' viewBox='0 0 24 24'><path d='M24 0V24H0A24 24 0 0 0 24 0Z' fill='#0a0a0a'/></svg>
</body></html>
